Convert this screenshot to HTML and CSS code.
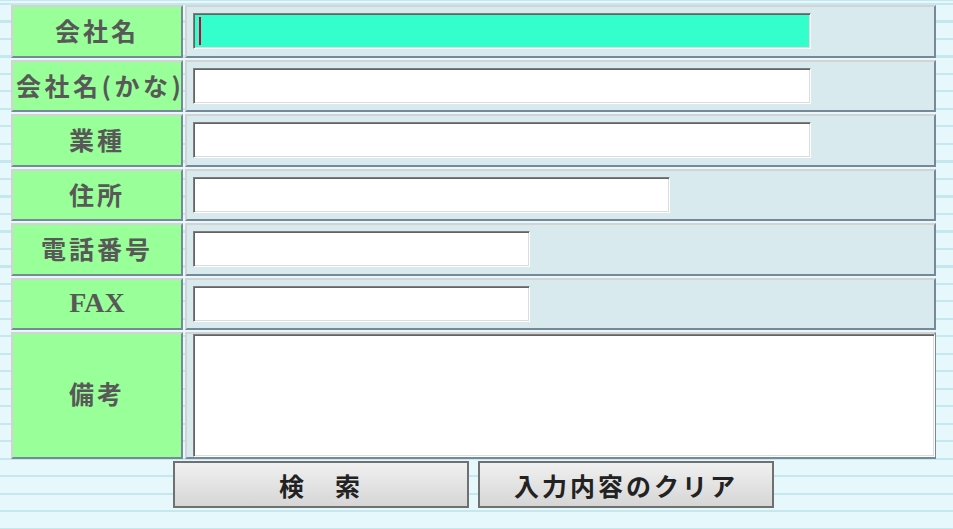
FILE: index.html
```html
<!DOCTYPE html>
<html lang="ja">
<head>
  <meta charset="UTF-8" />
  <title>会社検索</title>
  <link rel="stylesheet" href="styles.css">
</head>
<body>
  <form class="search-form">
    <table class="search-table">
      <tr>
        <th>会社名</th>
        <td><span class="caret-wrap"><input type="text" class="field field-focus w-long" /></span></td>
      </tr>
      <tr>
        <th class="tight">会社名(かな)</th>
        <td><input type="text" class="field w-long" /></td>
      </tr>
      <tr>
        <th>業種</th>
        <td><input type="text" class="field w-long" /></td>
      </tr>
      <tr>
        <th>住所</th>
        <td><input type="text" class="field w-mid" /></td>
      </tr>
      <tr>
        <th>電話番号</th>
        <td><input type="text" class="field w-short" /></td>
      </tr>
      <tr>
        <th class="latin">FAX</th>
        <td><input type="text" class="field w-short" /></td>
      </tr>
      <tr class="memo-row">
        <th>備考</th>
        <td class="memo-cell"><textarea class="field memo"></textarea></td>
      </tr>
    </table>

    <div class="buttons">
      <button type="button">検　索</button>
      <button type="reset">入力内容のクリア</button>
    </div>
  </form>
</body>
</html>
```

FILE: styles.css
```css
body {
  margin: 0;
  padding: 3px 9px;
  font-family: "Noto Sans CJK JP", sans-serif;
  background-color: #e6f8fc;
  background-image: repeating-linear-gradient(to bottom, #c4e8ed 0, #c4e8ed 2px, #e6f8fc 2px, #e6f8fc 17.5px);
  background-position: 0 3px;
  min-height: 529px;
  box-sizing: border-box;
}

.search-form {
  width: 929px;
}

.search-table {
  width: 929px;
  border-collapse: separate;
  border-spacing: 2px;
  table-layout: fixed;
}

.search-table th,
.search-table td {
  box-sizing: border-box;
  height: 52.5px;
  border: 2px solid;
  border-color: #d3d3d3 #778899 #778899 #d3d3d3;
}

.search-table th {
  width: 172px;
  padding: 0 0 2px;
  background: #99ff99;
  color: #585858;
  font-size: 25px;
  font-weight: bold;
  letter-spacing: 3px;
  text-align: center;
  white-space: nowrap;
}

.search-table th.tight {
  letter-spacing: 3.5px;
  text-indent: 3px;
}

.search-table th.latin {
  font-family: "Liberation Serif", serif;
  font-size: 28px;
  letter-spacing: 0;
}

.search-table td {
  padding: 0 6px;
  background: #d8eaed;
  vertical-align: middle;
}

.field {
  box-sizing: border-box;
  display: block;
  height: 36px;
  margin: 0;
  padding: 2px 6px;
  border: 1px solid;
  border-color: #7e7e7e #ffffff #ffffff #7e7e7e;
  box-shadow: inset 1px 1px 0 #636363, inset -1px -1px 0 #dcdcdc;
  background: #fff;
  font-size: 18px;
  font-family: inherit;
  outline: none;
}

.field-focus {
  background: #33ffcc;
}

.w-long { width: 618px; }
.w-mid { width: 477px; }
.w-short { width: 337px; }

.caret-wrap {
  position: relative;
  display: block;
}

.caret-wrap::after {
  content: "";
  position: absolute;
  left: 6px;
  top: 4px;
  width: 2px;
  height: 28px;
  background: #cc0033;
}

.memo-row th,
.memo-row td {
  height: 127px;
}

.memo-row th {
  padding-bottom: 6px;
}

.memo-cell {
  overflow: visible;
}

.memo {
  width: 742px;
  height: 123px;
  resize: none;
}

.buttons {
  display: flex;
  justify-content: center;
  gap: 9px;
}

.buttons button {
  width: 296px;
  height: 47px;
  border: 2px solid #707070;
  background: linear-gradient(to bottom, #f0f0f0, #d6d6d6);
  color: #222;
  font-family: "Noto Sans CJK JP", sans-serif;
  font-size: 25px;
  font-weight: bold;
  letter-spacing: 3px;
  padding: 0;
  cursor: pointer;
}
```
